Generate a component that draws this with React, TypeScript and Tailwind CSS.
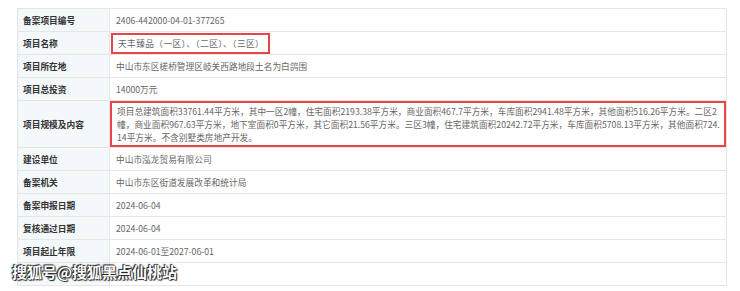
const rows: { label: string; value: string; boxed?: boolean }[] = [
  { label: "备案项目编号", value: "2406-442000-04-01-377265" },
  { label: "项目名称", value: "天丰臻品（一区）、（二区）、（三区）", boxed: true },
  { label: "项目所在地", value: "中山市东区槎桥管理区岐关西路地段土名为白鸽围" },
  { label: "项目总投资", value: "14000万元" },
];

const scopeLines = [
  "项目总建筑面积33761.44平方米，其中一区2幢，住宅面积2193.38平方米，商业面积467.7平方米，车库面积2941.48平方米，其他面积516.26平方米。二区2",
  "幢，商业面积967.63平方米，地下室面积0平方米，其它面积21.56平方米。三区3幢，住宅建筑面积20242.72平方米，车库面积5708.13平方米，其他面积724.",
  "14平方米。不含别墅类房地产开发。",
];

const rest = [
  { label: "建设单位", value: "中山市泓龙贸易有限公司" },
  { label: "备案机关", value: "中山市东区街道发展改革和统计局" },
  { label: "备案申报日期", value: "2024-06-04" },
  { label: "复核通过日期", value: "2024-06-04" },
  { label: "项目起止年限", value: "2024-06-01至2027-06-01" },
  { label: "", value: "" },
];

function Row({ label, children, tall }: { label: string; children: React.ReactNode; tall?: boolean }) {
  return (
    <div className={`flex border-b border-[#e6e6e6] ${tall ? "h-[47px]" : "h-[23px]"}`}>
      <div className="flex w-[92px] shrink-0 items-center border-r border-[#e6e6e6] bg-[#f3f8fb] pl-[5px] font-bold text-[#333]">
        {label}
      </div>
      <div className="flex min-w-0 flex-1 items-center">{children}</div>
    </div>
  );
}

export default function App() {
  return (
    <div
      className="relative h-[291px] w-[740px] overflow-hidden bg-white pl-[17px] pt-[8px] text-[8.7px] leading-[13px]"
      style={{ fontFamily: '"Noto Sans CJK SC", "Microsoft YaHei", sans-serif' }}
    >
      <div className="w-[710px] border-l border-r border-t border-[#e6e6e6]">
        {rows.map((r) => (
          <Row key={r.label} label={r.label}>
            {r.boxed ? (
              <span className="ml-[1px] flex h-[21px] items-center border-2 border-[#e8444a] pl-[5px] pr-[4px] tracking-[0.4px] text-[#666]">
                {r.value}
              </span>
            ) : (
              <span className="pl-[6px] text-[#666]">{r.value}</span>
            )}
          </Row>
        ))}
        <Row label="项目规模及内容" tall>
          <div className="flex h-full w-full flex-col justify-center border-2 border-[#e8444a] pl-[5px] text-[#666]">
            {scopeLines.map((l) => (
              <span key={l} className="block whitespace-nowrap">
                {l}
              </span>
            ))}
          </div>
        </Row>
        {rest.map((r, i) => (
          <Row key={i} label={r.label}>
            <span className="pl-[6px] text-[#666]">{r.value}</span>
          </Row>
        ))}
      </div>
      <div className="absolute left-[12px] top-[262px] text-[15px] font-bold leading-[20px] text-white [text-shadow:0_0_1px_#222,0_0_1px_#222,1px_1px_1px_#222,-1px_-1px_1px_#222]">
        搜狐号@搜狐黑点仙桃站
      </div>
    </div>
  );
}
